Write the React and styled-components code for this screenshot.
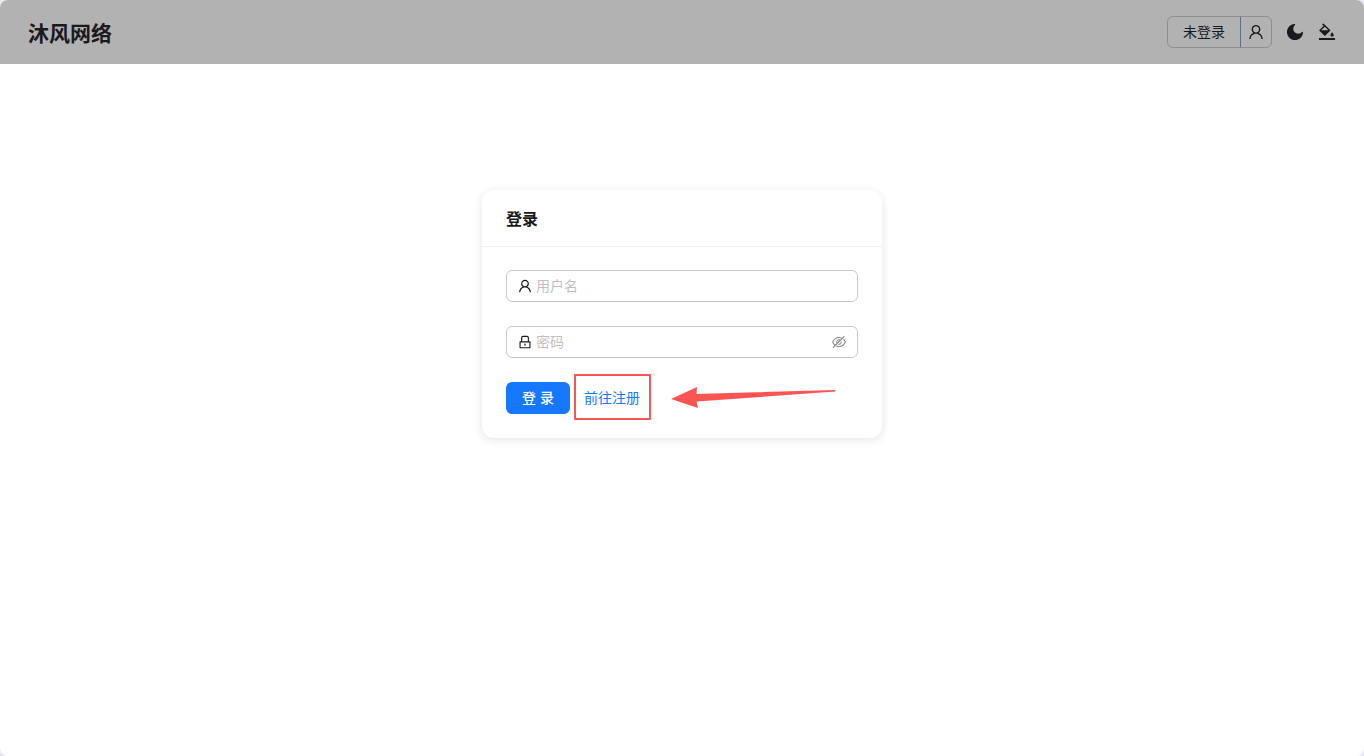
import React from 'react';
import styled, { createGlobalStyle } from 'styled-components'
import {
  AiOutlineUser,
  AiOutlineLock,
  AiOutlineEyeInvisible,
  AiOutlineBgColors,
  AiFillMoon,
} from 'react-icons/ai'

// trims the empty margin round the glyphs
const iconBox = '64 64 896 896'

const GlobalStyle = createGlobalStyle`
  * {
    box-sizing: border-box;
  }

  body {
    margin: 0;
    background: #e8e8f2;
    color: #1a1a1e;
    font-family: 'Liberation Sans', 'Noto Sans CJK SC', sans-serif;
    font-size: 14px;
    line-height: 22px;
  }

  h1, h2 {
    font-family: 'Noto Sans CJK SC', sans-serif;
    font-weight: 700;
  }

  button, input {
    font: inherit;
    color: inherit;
  }
`
const Page = styled.div`
  min-height: 100vh;
  background: #fff;
  border-radius: 8px;
  overflow: hidden;
`
const Header = styled.header`
  display: flex;
  align-items: center;
  justify-content: space-between;
  height: 64px;
  padding: 0 21px 0 28px;
  background: #b2b2b2;
`
const Brand = styled.h1`
  margin: 0;
  font-size: 21px;
  line-height: 30px;
`
const Tools = styled.div`
  display: flex;
  align-items: center;
`
const Account = styled.div`
  display: flex;
  height: 32px;
  margin-right: 7px;
  border: 1px solid #8e8e8e;
  border-radius: 6px;
`
const AccountButton = styled.button`
  display: flex;
  align-items: center;
  justify-content: center;
  padding: ${props => props.$icon ? '0' : '0 15px'};
  width: ${props => props.$icon ? '31px' : 'auto'};
  border: 0;
  border-left: ${props => props.$icon ? '1px solid #56708c' : '0'};
  background: none;
  font-size: ${props => props.$icon ? '16px' : '14px'};
  cursor: pointer;
`
const IconButton = styled.button`
  display: flex;
  align-items: center;
  justify-content: center;
  width: 32px;
  height: 32px;
  padding: 0;
  border: 0;
  background: none;
  font-size: 18px;
  cursor: pointer;
`
const Main = styled.main`
  display: flex;
  justify-content: center;
  padding: 126px 24px 24px;
`
const Card = styled.section`
  width: 100%;
  max-width: 400px;
  border-radius: 12px;
  box-shadow: 0 2px 8px 1px rgba(0, 0, 0, 0.09);
`
const CardTitle = styled.h2`
  margin: 0 0 -1px;
  padding: 16px 24px;
  border-bottom: 1px solid #f0f0f0;
  font-size: 16px;
  line-height: 24px;
`
const Form = styled.form`
  display: flex;
  flex-direction: column;
  gap: 24px;
  padding: 24px;
`
const Field = styled.label`
  display: flex;
  align-items: center;
  gap: 4px;
  height: 32px;
  padding: 0 11px;
  border: 1px solid #c8c8c8;
  border-radius: 6px;

  svg {
    flex: none;
  }
`
const TextInput = styled.input`
  flex: 1;
  min-width: 0;
  padding: 0;
  border: 0;
  outline: 0;
  background: none;

  &::placeholder {
    color: #bfbfbf;
    opacity: 1;
  }
`
const EyeButton = styled.button`
  display: flex;
  padding: 0;
  border: 0;
  background: none;
  color: #8c8c8c;
  cursor: pointer;
`
const Actions = styled.div`
  display: flex;
  align-items: center;
  height: 32px;
`
const Submit = styled.button`
  height: 32px;
  padding: 0 16px;
  border: 0;
  border-radius: 6px;
  background: #1677ff;
  color: #fff;
  font-weight: 500;
  cursor: pointer;
`
const Highlight = styled.span`
  position: relative;
  margin-left: 14px;

  // frame and arrow sit over the form
  &::before {
    content: "";
    position: absolute;
    inset: -13px -11px -11px -10px;
    border: 2px solid #fc5453;
    border-radius: 1px;
    pointer-events: none;
  }
`
const RegisterLink = styled.a`
  color: #1677ff;
  text-decoration: none;
`
const Arrow = styled.svg`
  position: absolute;
  left: 87px;
  top: 0;
  pointer-events: none;
`

const App = () => {
  return (
    <Page>
      <GlobalStyle />
      <Header>
        <Brand>沐风网络</Brand>
        <Tools>
          <Account>
            <AccountButton type="button">未登录</AccountButton>
            <AccountButton type="button" $icon aria-label="账户"><AiOutlineUser viewBox={iconBox} /></AccountButton>
          </Account>
          <IconButton type="button" aria-label="深色模式"><AiFillMoon viewBox={iconBox} /></IconButton>
          <IconButton type="button" aria-label="主题颜色"><AiOutlineBgColors viewBox={iconBox} /></IconButton>
        </Tools>
      </Header>
      <Main>
        <Card>
          <CardTitle>登录</CardTitle>
          <Form onSubmit={e => e.preventDefault()}>
            <Field>
              <AiOutlineUser size={14} viewBox={iconBox} />
              <TextInput type="text" name="username" placeholder="用户名" aria-label="用户名" />
            </Field>
            <Field>
              <AiOutlineLock size={14} viewBox={iconBox} />
              <TextInput type="password" name="password" placeholder="密码" aria-label="密码" />
              <EyeButton type="button" aria-label="显示密码"><AiOutlineEyeInvisible size={14} viewBox={iconBox} /></EyeButton>
            </Field>
            <Actions>
              <Submit type="submit">登 录</Submit>
              <Highlight>
                <RegisterLink href="#register">前往注册</RegisterLink>
                <Arrow width="166" height="24" viewBox="0 0 166 24" aria-hidden="true">
                  <path d="M0 12 L26 0 L25.500 7 L164 3 L164.500 4.500 L25.500 14.500 L27 21 Z" fill="#fc5453" />
                </Arrow>
              </Highlight>
            </Actions>
          </Form>
        </Card>
      </Main>
    </Page>
  );
}

export default App;
